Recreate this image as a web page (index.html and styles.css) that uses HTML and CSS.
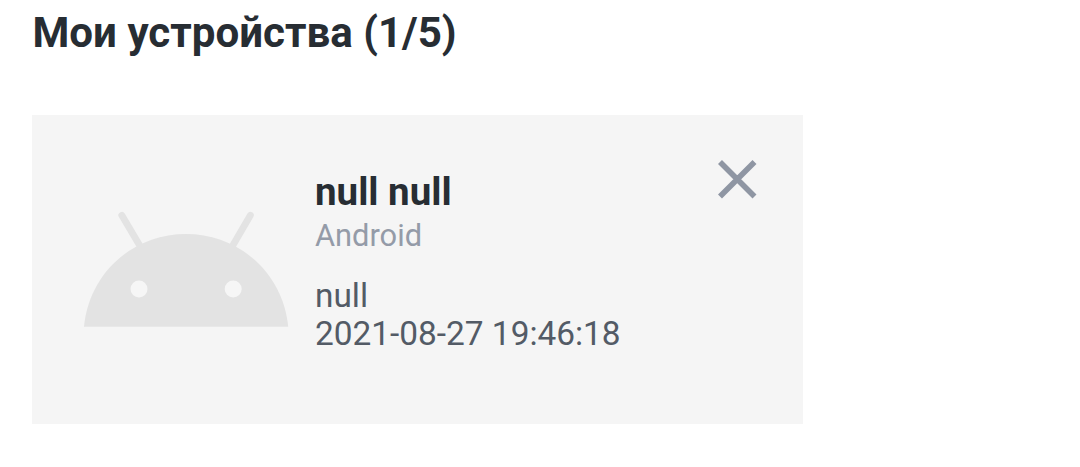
FILE: index.html
```
<!DOCTYPE html>
<html lang="ru">
<head>
  <meta charset="UTF-8">
  <title>Мои устройства</title>
  <link rel="stylesheet" href="styles.css">
</head>
<body>
  <h1>Мои устройства (1/5)</h1>

  <div class="device">
    <svg class="device-icon" viewBox="0 0 206 118" aria-hidden="true">
      <path d="M38.8 6.3L57 37M167.4 6.3L149.5 37" stroke="#e3e3e3" stroke-width="6.8" stroke-linecap="round"/>
      <path d="M1 117.8C6 64 50 25 103 25S200 64 205.2 117.8Z" fill="#e3e3e3"/>
      <circle cx="56" cy="80" r="8.5" fill="#f6f6f6"/>
      <circle cx="150.2" cy="80" r="8.5" fill="#f6f6f6"/>
    </svg>
    <div class="device-info">
      <h2>null null</h2>
      <p class="platform">Android</p>
      <p class="details">null<br>2021-08-27 19:46:18</p>
    </div>
    <button type="button" class="remove" aria-label="Удалить устройство">
      <svg viewBox="0 0 38 38"><path d="M2 2L36.5 36.5M36.5 2L2 36.5" stroke="#8f96a3" stroke-width="5.6"/></svg>
    </button>
  </div>
</body>
</html>
```
FILE: styles.css
```
body {
  font-family: Roboto, sans-serif;
  background-color: #fff;
  color: #272d33;
  margin: 0;
  padding: 8px 32px;
}

h1 {
  font-size: 42.1px;
  line-height: 50px;
  margin: 0 0 57px;
  padding-left: 0.5px;
}

.device {
  display: flex;
  align-items: flex-start;
  box-sizing: border-box;
  width: 770.5px;
  height: 309px;
  padding: 45px 47px 0 51px;
  background-color: #f5f5f5;
}

.device-icon {
  width: 206px;
  height: 118px;
  margin-top: 49px;
}

.device-info {
  flex: 1;
  margin: 9px 0 0 26px;
}

h2 {
  font-size: 38.5px;
  line-height: 46px;
  margin: 0;
}

p {
  margin: 0;
}

.platform {
  color: #949ba8;
  font-size: 30.8px;
  line-height: 42px;
}

.details {
  color: #535b66;
  font-size: 33.4px;
  line-height: 38px;
  margin-top: 20px;
}

.remove {
  width: 38px;
  height: 38px;
  padding: 0;
  border: none;
  background: none;
  cursor: pointer;
}

.remove svg {
  display: block;
  overflow: visible;
}
```
